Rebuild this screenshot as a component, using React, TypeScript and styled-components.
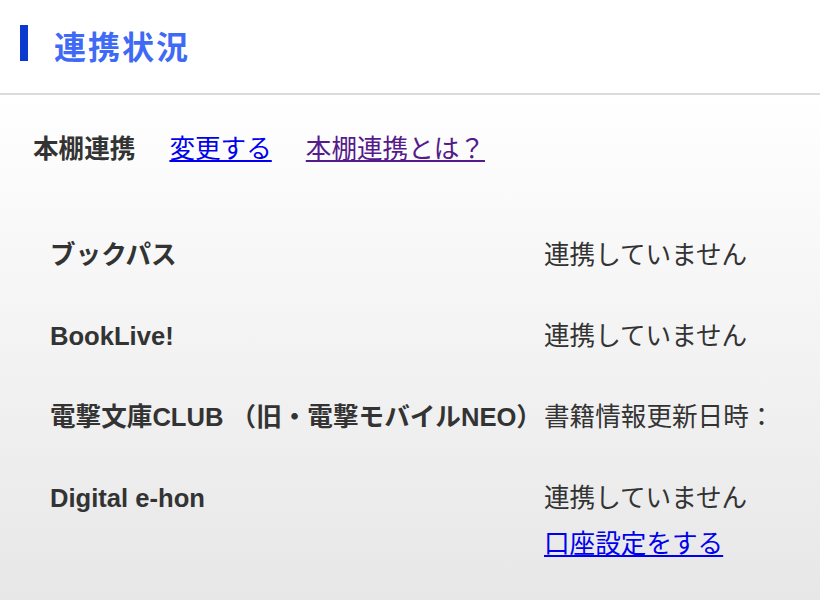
import styled, { createGlobalStyle } from 'styled-components';

const GlobalStyle = createGlobalStyle`
	html, body {
		margin: 0;
		padding: 0;
	}
	body {
		font-family: "Liberation Sans", "Noto Sans CJK JP", sans-serif;
		color: #333;
		background: #e8e8e8;
	}
`;

const Page = styled.div`
	width: 820px;
	min-height: 600px;
	display: flex;
	flex-direction: column;
`;

const Header = styled.header`
	height: 93px;
	background: #fff;
	border-bottom: 2px solid #dcdcdc;
	display: flex;
	align-items: center;
	padding-left: 20px;
	gap: 26px;
`;

const Bar = styled.span`
	display: block;
	width: 8px;
	height: 36px;
	margin-top: -8px;
	background: #0a3ad0;
`;

const Title = styled.h1`
	margin: 0;
	margin-top: -4px;
	font-size: 32px;
	font-weight: bold;
	letter-spacing: 2px;
	color: #3f6af6;
`;

const Body = styled.main`
	flex: 1;
	background: linear-gradient(#ffffff, #e7e7e7);
	padding: 34px 0 30px 33px;
`;

const Links = styled.div`
	display: flex;
	align-items: baseline;
	gap: 34px;
	font-size: 25.6px;
	line-height: 40px;
`;

const Label = styled.strong`
	font-weight: bold;
`;

const Link = styled.a<{ visited?: boolean }>`
	color: ${(p) => (p.visited ? '#551a8b' : '#0000ee')};
	text-decoration: underline;
	cursor: pointer;
`;

const Table = styled.div`
	margin-top: 66px;
	padding-left: 17px;
	display: grid;
	grid-template-columns: 494px 1fr;
	row-gap: 41px;
	align-items: start;
`;

const Name = styled.div`
	font-size: 25.6px;
	font-weight: bold;
	line-height: 40px;
	white-space: nowrap;
`;

const Status = styled.div`
	font-size: 25.6px;
	line-height: 40px;
	display: flex;
	flex-direction: column;
	gap: 6px;
`;

interface Service {
	name: string;
	status: string;
	action?: string;
}

const services: Service[] = [
	{ name: 'ブックパス', status: '連携していません' },
	{ name: 'BookLive!', status: '連携していません' },
	{ name: '電撃文庫CLUB （旧・電撃モバイルNEO）', status: '書籍情報更新日時：' },
	{ name: 'Digital e-hon', status: '連携していません', action: '口座設定をする' },
];

export default function App() {
	return (
		<>
			<GlobalStyle />
			<Page>
				<Header>
					<Bar />
					<Title>連携状況</Title>
				</Header>
				<Body>
					<Links>
						<Label>本棚連携</Label>
						<Link>変更する</Link>
						<Link visited>本棚連携とは？</Link>
					</Links>
					<Table>
						{services.map((s) => (
							<>
								<Name key={`${s.name}-n`}>{s.name}</Name>
								<Status key={`${s.name}-s`}>
									<span>{s.status}</span>
									{s.action && <Link>{s.action}</Link>}
								</Status>
							</>
						))}
					</Table>
				</Body>
			</Page>
		</>
	);
}
